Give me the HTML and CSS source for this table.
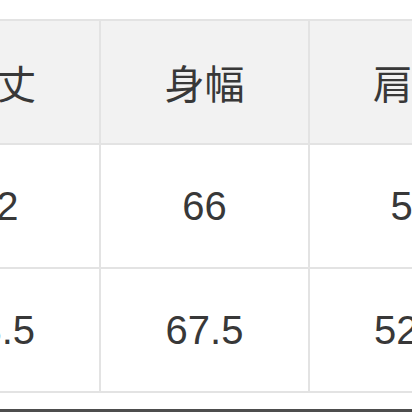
FILE: index.html
```html
<!DOCTYPE html>
<html lang="ja">
<head>
<meta charset="utf-8">
<link rel="stylesheet" href="styles.css">
</head>
<body>
<div class="frame">
  <table class="sizes">
    <thead>
      <tr><th>着丈</th><th>身幅</th><th>肩幅</th></tr>
    </thead>
    <tbody>
      <tr><td>72</td><td>66</td><td>51</td></tr>
      <tr><td>73.5</td><td>67.5</td><td>52.5</td></tr>
    </tbody>
  </table>
  <div class="spacer"></div>
  <div class="bottom-line"></div>
</div>
</body>
</html>
```

FILE: styles.css
```css
html, body {
  margin: 0;
  padding: 0;
  background: #ffffff;
}
.frame {
  width: 412px;
  height: 412px;
  overflow: hidden;
  display: flex;
  flex-direction: column;
  padding-top: 19px;
  box-sizing: border-box;
}
.sizes {
  border-collapse: collapse;
  margin-left: -109px;
  width: 627px;
  table-layout: fixed;
  flex: none;
}
.sizes th, .sizes td {
  border: 2px solid #e3e3e3;
  text-align: center;
  vertical-align: middle;
  color: #383838;
  font-size: 40px;
  font-weight: normal;
  padding: 0;
}
.sizes th {
  background: #f2f2f2;
  height: 122px;
  font-family: "Noto Sans CJK JP", "Noto Sans", sans-serif;
}
.sizes td {
  height: 122px;
  font-family: "Liberation Sans", Arial, sans-serif;
}
.spacer {
  flex: 1;
}
.bottom-line {
  height: 3px;
  background: #4d4d4d;
  flex: none;
}
```
